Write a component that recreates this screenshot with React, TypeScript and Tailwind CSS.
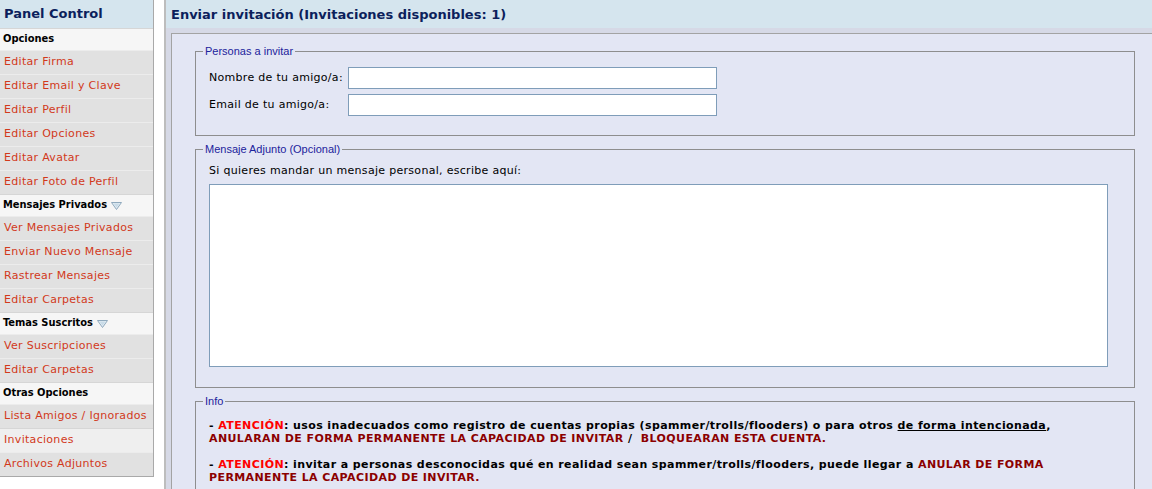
import React from "react";

type Row = { label: string; kind: "section" | "link"; arrow?: boolean; active?: boolean };

const rows: Row[] = [
  { label: "Opciones", kind: "section" },
  { label: "Editar Firma", kind: "link" },
  { label: "Editar Email y Clave", kind: "link" },
  { label: "Editar Perfil", kind: "link" },
  { label: "Editar Opciones", kind: "link" },
  { label: "Editar Avatar", kind: "link" },
  { label: "Editar Foto de Perfil", kind: "link" },
  { label: "Mensajes Privados", kind: "section", arrow: true },
  { label: "Ver Mensajes Privados", kind: "link" },
  { label: "Enviar Nuevo Mensaje", kind: "link" },
  { label: "Rastrear Mensajes", kind: "link" },
  { label: "Editar Carpetas", kind: "link" },
  { label: "Temas Suscritos", kind: "section", arrow: true },
  { label: "Ver Suscripciones", kind: "link" },
  { label: "Editar Carpetas", kind: "link" },
  { label: "Otras Opciones", kind: "section" },
  { label: "Lista Amigos / Ignorados", kind: "link" },
  { label: "Invitaciones", kind: "link", active: true },
  { label: "Archivos Adjuntos", kind: "link" },
];

function DownArrow() {
  return (
    <svg width="11" height="8" viewBox="0 0 11 8" className="ml-[4px] mt-[1px]">
      <polygon points="0.5,0.5 10.5,0.5 5.5,7.5" fill="#e4eef5" stroke="#8fa9bd" strokeWidth="1" />
      <polygon points="2.5,1.5 8.5,1.5 5.5,5.5" fill="#c9dbe8" />
    </svg>
  );
}

function Sidebar() {
  return (
    <div className="w-[154px] shrink-0 self-start border-r border-b border-[#a9a9a9]">
      <div className="h-[28px] bg-[#d5e5ee] flex items-center pl-[4px] font-['DejaVu_Sans',sans-serif] font-bold text-[13px] tracking-normal text-[#0c1f5c]">
        Panel Control
      </div>
      {rows.map((r, i) =>
        r.kind === "section" ? (
          <div
            key={i}
            className="h-[22px] bg-[#f6f6f6] border-t border-[#d6d6d6] flex items-center pl-[3px] font-['DejaVu_Sans_Condensed','DejaVu_Sans',sans-serif] font-bold text-[11px] tracking-normal text-black"
          >
            {r.label}
            {r.arrow && <DownArrow />}
          </div>
        ) : (
          <div
            key={i}
            className={
              r.active
                ? "h-[24px] bg-[#efefef] border-t border-[#d6d6d6] flex items-center pl-[4px] text-[11px] text-[#d2391b]"
                : "h-[24px] bg-[#e1e1e1] border-t border-[#ececec] flex items-center pl-[4px] text-[11px] text-[#d2391b]"
            }
          >
            {r.label}
          </div>
        )
      )}
    </div>
  );
}

function Legend({ children }: { children: React.ReactNode }) {
  return (
    <legend className="ml-[-6px] px-[2px] font-['Liberation_Sans',sans-serif] text-[11px] leading-[13px] tracking-normal text-[#1c239c]">
      {children}
    </legend>
  );
}

export default function App() {
  return (
    <div className="h-[489px] overflow-hidden bg-white flex font-['DejaVu_Sans',Verdana,sans-serif] tracking-[0.3px]">
      <Sidebar />
      <div className="w-[10px] shrink-0" />
      <div className="flex-1 border-l-2 border-[#bdbdbd] flex flex-col">
        <div className="h-[28px] shrink-0 bg-[#d5e5ee] flex items-center pl-[5px] pt-[1px] font-['DejaVu_Sans',sans-serif] font-bold text-[13px] tracking-normal text-[#0c1f5c]">
          Enviar invitación (Invitaciones disponibles: 1)
        </div>
        <div className="flex-1 bg-[#d6d9e6] pl-[5px] pt-[5px]">
          <div className="h-full border-l border-t border-[#a3a3a3] bg-[#e3e6f4] pl-[23px] pr-[17px] pt-[11px]">
            {/* Personas a invitar */}
            <fieldset className="border border-[#8e8e8e] pl-[13px] pr-[8px] pt-[9px] pb-[19px]">
              <Legend>Personas a invitar</Legend>
              <div className="flex items-center text-[11px] text-black">
                <label className="w-[139px] shrink-0">Nombre de tu amigo/a:</label>
                <input type="text" className="w-[369px] h-[22px] bg-white border border-[#7f9db9] outline-none" />
              </div>
              <div className="flex items-center mt-[5px] text-[11px] text-black">
                <label className="w-[139px] shrink-0">Email de tu amigo/a:</label>
                <input type="text" className="w-[369px] h-[22px] bg-white border border-[#7f9db9] outline-none" />
              </div>
            </fieldset>

            {/* Mensaje adjunto */}
            <fieldset className="mt-[7px] border border-[#8e8e8e] pl-[13px] pr-[26px] pt-[8px] pb-[20px]">
              <Legend>Mensaje Adjunto (Opcional)</Legend>
              <p className="text-[11px] leading-[14px] text-black">Si quieres mandar un mensaje personal, escribe aquí:</p>
              <textarea className="block mt-[6px] w-full h-[183px] bg-white border border-[#7f9db9] outline-none resize-none" />
            </fieldset>

            {/* Info */}
            <fieldset className="mt-[7px] border border-[#8e8e8e] pl-[13px] pr-[8px] pt-[11px] pb-[20px]">
              <Legend>Info</Legend>
              <div className="font-['DejaVu_Sans',Verdana,sans-serif] font-bold text-[11px] leading-[13px] tracking-[0.4px] text-black">
                - <span className="text-[#ff0000]">ATENCIÓN</span>: usos inadecuados como registro de cuentas propias
                (spammer/trolls/flooders) o para otros <span className="underline">de forma intencionada</span>,
                <br />
                <span className="text-[#8b0000]">ANULARAN DE FORMA PERMANENTE LA CAPACIDAD DE INVITAR</span> /&nbsp;{" "}
                <span className="text-[#8b0000]">BLOQUEARAN ESTA CUENTA.</span>
                <br />
                <br />
                - <span className="text-[#ff0000]">ATENCIÓN</span>: invitar a personas desconocidas qué en realidad sean
                spammer/trolls/flooders, puede llegar a <span className="text-[#8b0000]">ANULAR DE FORMA</span>
                <br />
                <span className="text-[#8b0000]">PERMANENTE LA CAPACIDAD DE INVITAR.</span>
              </div>
            </fieldset>
          </div>
        </div>
      </div>
    </div>
  );
}
